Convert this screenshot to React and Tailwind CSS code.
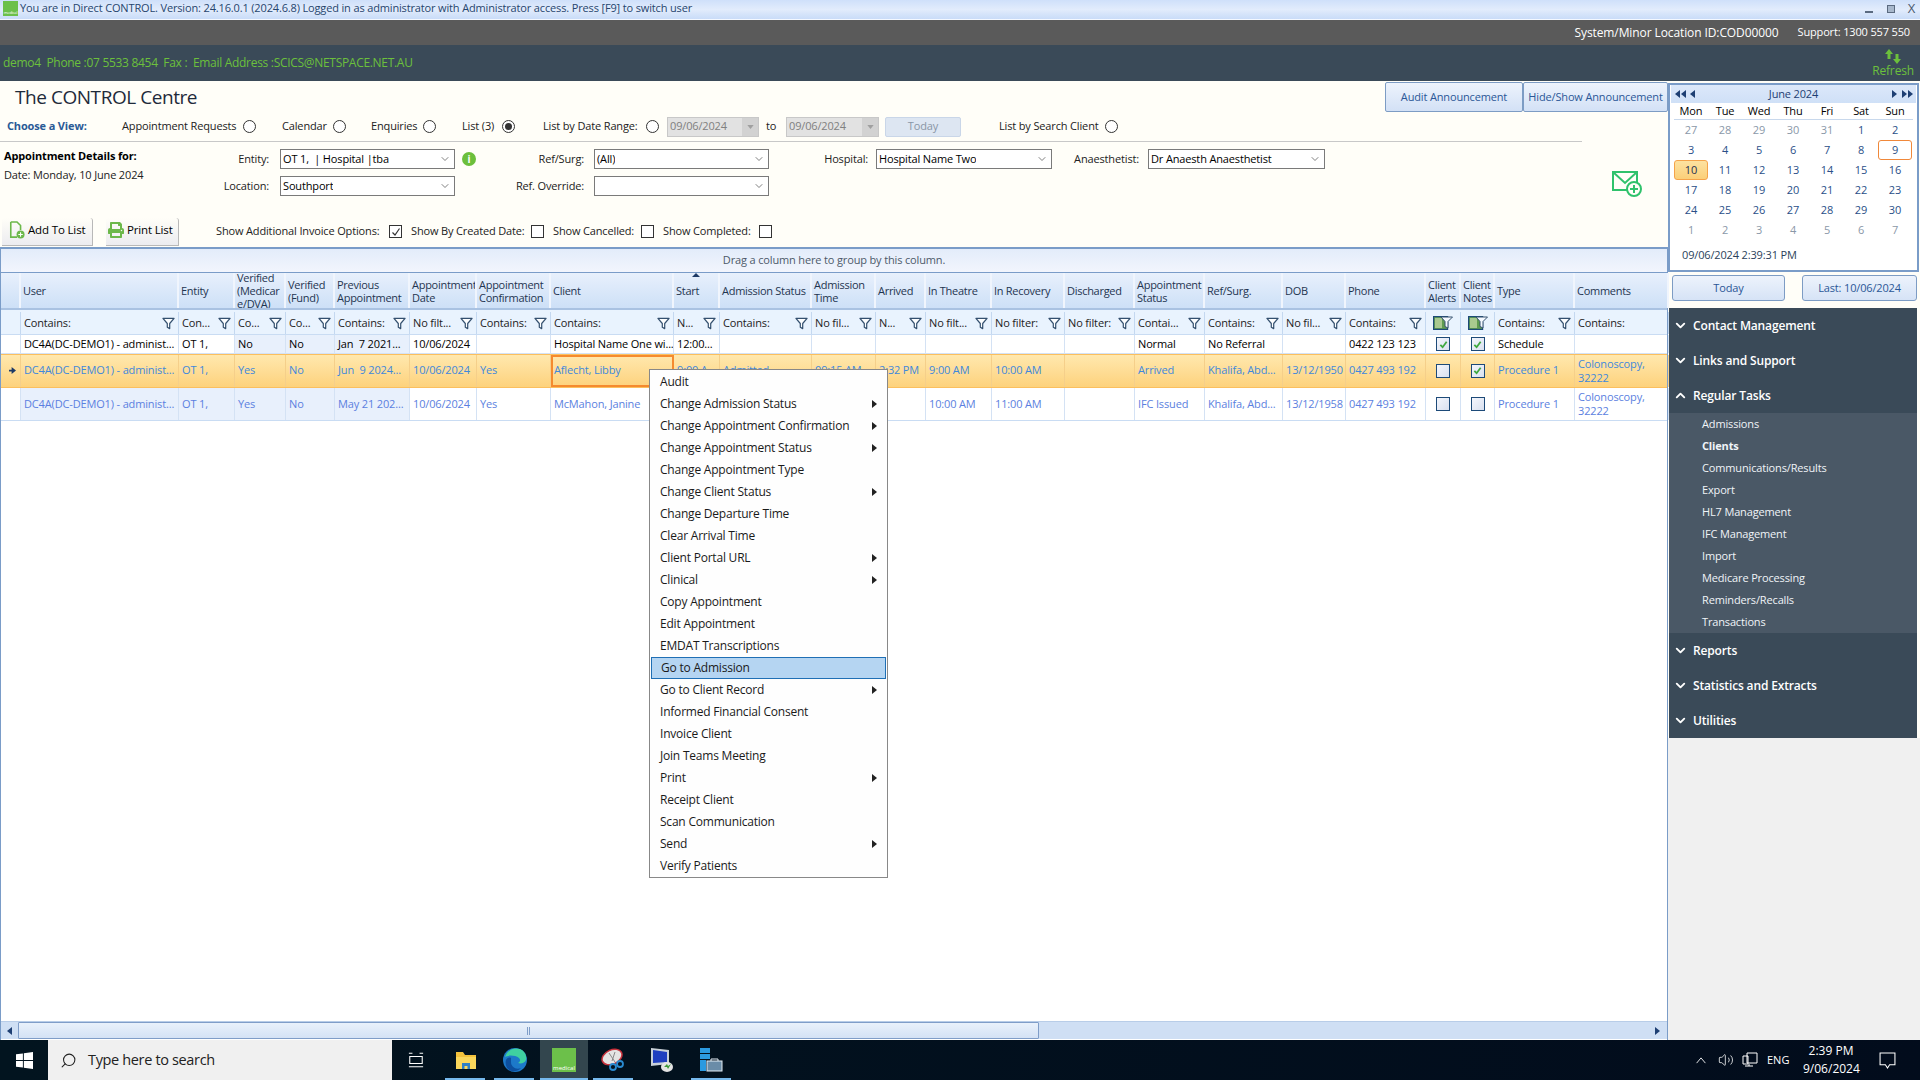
import React from "react";
import { ChevronDown, ChevronUp, Volume2, Search } from "lucide-react";
import { FaPrint } from "react-icons/fa";

const COLS = "grid grid-cols-[20px_158px_56px_51px_49px_75px_67px_74px_123px_46px_92px_64px_50px_66px_73px_70px_70px_78px_63px_80px_35px_34px_80px_94px]";

const Radio = ({ on, className = "" }) => (
  <span className={`w-[13px] h-[13px] shrink-0 rounded-full border border-[#333] bg-white flex items-center justify-center ${className}`}>
    {on && <span className="w-[7px] h-[7px] rounded-full bg-[#333]" />}
  </span>
);

const Filter = ({ className = "" }) => (
  <svg viewBox="0 0 14 14" className={`w-[13px] h-[13px] shrink-0 ${className}`}>
    <path d="M1 1.5h12L8.3 7v5.5L5.7 11V7z" fill="#fdfeff" stroke="#34506f" strokeWidth="1.3" strokeLinejoin="round" />
  </svg>
);

const FilterBox = () => (
  <svg viewBox="0 0 20 14" className="w-[20px] h-[14px]">
    <rect x="0.6" y="0.6" width="14" height="12.8" fill="#5f9b50" stroke="#1d4a78" strokeWidth="1.2" />
    <rect x="2" y="2" width="7" height="10" fill="#a9c98f" />
    <path d="M8 1h11.5L15 5.5V12l-3-1.5v-5z" fill="#f5f9ff" stroke="#34506f" strokeWidth="1" strokeLinejoin="round" />
  </svg>
);

const Check = ({ on }) => (
  <span className="w-[14px] h-[14px] border border-[#1d4a78] bg-gradient-to-br from-[#f4f6fc] to-[#d9e0ef] flex items-center justify-center">
    {on && (
      <svg viewBox="0 0 10 10" className="w-[9px] h-[9px]">
        <path d="M1.5 5.5L4 8l4.5-6" fill="none" stroke="#3fa83f" strokeWidth="2" />
      </svg>
    )}
  </span>
);

const PlainBox = ({ on }) => (
  <span className="w-[13px] h-[13px] border border-[#333] bg-white flex items-center justify-center ml-[6px] shrink-0">
    {on && (
      <svg viewBox="0 0 10 10" className="w-[10px] h-[10px]">
        <path d="M1.5 5.5L4 8l4.5-6.5" fill="none" stroke="#333" strokeWidth="1.2" />
      </svg>
    )}
  </span>
);

const Select = ({ w, value }) => (
  <div className={`${w} h-[20px] shrink-0 border border-[#7a7a7a] bg-white flex items-center justify-between pl-[2px] pr-[3px] text-black`}>
    <span className="whitespace-pre overflow-hidden">{value}</span>
    <ChevronDown size={12} strokeWidth={1.5} color="#555" />
  </div>
);

const DateBox = ({ w }) => (
  <div className={`${w} h-[20px] shrink-0 border border-[#c8c8c8] bg-[#e2e2e2] flex items-center justify-between pl-[2px] text-[#808080]`}>
    <span>09/06/2024</span>
    <span className="w-[16px] h-full bg-[#d2d2d2] flex items-center justify-center">
      <svg viewBox="0 0 8 5" className="w-[7px] h-[4px]"><path d="M0 0h8L4 5z" fill="#a0a0a0" /></svg>
    </span>
  </div>
);

const headers = [
  "", "User", "Entity", "Verified (Medicar e/DVA)", "Verified (Fund)", "Previous Appointment", "Appointment Date",
  "Appointment Confirmation", "Client", "Start", "Admission Status", "Admission Time", "Arrived", "In Theatre", "In Recovery",
  "Discharged", "Appointment Status", "Ref/Surg.", "DOB", "Phone", "Client Alerts", "Client Notes", "Type", "Comments",
];
const filters = [
  "", "Contains:", "Con...", "Co...", "Co...", "Contains:", "No filt...", "Contains:", "Contains:", "N...", "Contains:", "No fil...", "N...",
  "No filt...", "No filter:", "No filter:", "Contai...", "Contains:", "No fil...", "Contains:", "#", "#", "Contains:", "Contains:",
];
const row1 = ["", "DC4A(DC-DEMO1) - administ...", "OT 1,", "No", "No", "Jan  7 2021...", "10/06/2024", "", "Hospital Name One wi...", "12:00...", "", "", "", "", "", "", "Normal", "No Referral", "", "0422 123 123", true, true, "Schedule", ""];
const row2 = ["*", "DC4A(DC-DEMO1) - administ...", "OT 1,", "Yes", "No", "Jun  9 2024...", "10/06/2024", "Yes", "Aflecht, Libby", "9:00 A", "Admitted", "09:15 AM", "2:32 PM", "9:00 AM", "10:00 AM", "", "Arrived", "Khalifa, Abd...", "13/12/1950", "0427 493 192", false, true, "Procedure 1", "Colonoscopy, 32222"];
const row3 = ["", "DC4A(DC-DEMO1) - administ...", "OT 1,", "Yes", "No", "May 21 202...", "10/06/2024", "Yes", "McMahon, Janine", "", "", "", "", "10:00 AM", "11:00 AM", "", "IFC Issued", "Khalifa, Abd...", "13/12/1958", "0427 493 192", false, false, "Procedure 1", "Colonoscopy, 32222"];

const menu = [
  ["Audit"], ["Change Admission Status", 1], ["Change Appointment Confirmation", 1], ["Change Appointment Status", 1], ["Change Appointment Type"],
  ["Change Client Status", 1], ["Change Departure Time"], ["Clear Arrival Time"], ["Client Portal URL", 1], ["Clinical", 1], ["Copy Appointment"],
  ["Edit Appointment"], ["EMDAT Transcriptions"], ["Go to Admission", 0, 1], ["Go to Client Record", 1], ["Informed Financial Consent"], ["Invoice Client"],
  ["Join Teams Meeting"], ["Print", 1], ["Receipt Client"], ["Scan Communication"], ["Send", 1], ["Verify Patients"],
];

const cal = [
  [27, 28, 29, 30, 31, 1, 2], [3, 4, 5, 6, 7, 8, 9], [10, 11, 12, 13, 14, 15, 16], [17, 18, 19, 20, 21, 22, 23], [24, 25, 26, 27, 28, 29, 30], [1, 2, 3, 4, 5, 6, 7],
];

const Tri = ({ dir, double }) => (
  <svg viewBox={double ? "0 0 11 8" : "0 0 5 8"} className={double ? "w-[11px] h-[8px]" : "w-[5px] h-[8px]"}>
    {dir === "l" ? (
      <>
        <path d="M5 0v8L0 4z" fill="#1e3f73" />
        {double && <path d="M11 0v8L6 4z" fill="#1e3f73" />}
      </>
    ) : (
      <>
        <path d="M0 0v8l5-4z" fill="#1e3f73" />
        {double && <path d="M6 0v8l5-4z" fill="#1e3f73" />}
      </>
    )}
  </svg>
);

const Section = ({ open, label }) => (
  <div className="h-[35px] flex items-center pl-[4px] text-white text-[12px] font-semibold">
    {open ? <ChevronUp size={15} strokeWidth={3} /> : <ChevronDown size={15} strokeWidth={3} />}
    <span className="ml-[5px]">{label}</span>
  </div>
);

const GridRow = ({ cells, kind }) => {
  const isSel = kind === "sel";
  const rowCls = isSel
    ? "h-[34px] bg-gradient-to-b from-[#ffe8ae] to-[#fdd27c] border-y border-[#fbbf5e] text-[#3f88dc]"
    : kind === "a"
    ? "h-[19px] text-black border-b border-[#d4e2f4]"
    : "h-[33px] text-[#5b7fe0] border-b border-[#c9dcf3]";
  return (
    <div className={`${COLS} ${rowCls} shrink-0`}>
      {cells.map((c, i) => {
        const tinted = !isSel && ((kind === "a" && i >= 3 && i <= 5) || (kind === "b" && i >= 1 && i <= 5));
        const client = isSel && i === 8;
        return (
          <div
            key={i}
            className={`flex items-center overflow-hidden ${isSel ? "pb-[1px]" : ""} ${client ? "border-2 border-[#f58a2e] pl-[1px]" : `border-r ${isSel ? "border-[#f5cf8a]" : "border-[#d4e2f4]"}`} ${tinted ? "bg-[#e8f0fc]" : ""} ${typeof c === "boolean" ? "justify-center" : client ? "" : "pl-[3px]"} ${i === 0 ? "justify-center pl-0" : ""}`}
          >
            {typeof c === "boolean" ? (
              <Check on={c} />
            ) : c === "*" ? (
              <svg viewBox="0 0 8 8" className="w-[7px] h-[7px]"><path d="M0 3h3V0l5 4-5 4V5H0z" fill="#1d3a66" /></svg>
            ) : (
              <span className={i === 23 ? "block w-[70px] leading-[14px] whitespace-normal" : "whitespace-pre"}>{c}</span>
            )}
          </div>
        );
      })}
    </div>
  );
};

export default function App() {
  return (
    <div className="relative w-[1920px] h-[1080px] flex flex-col overflow-hidden text-[11px] text-[#222] font-['Open_Sans','Noto_Sans',sans-serif] tracking-[-0.15px] bg-[#fffef8]">
      {/* Title bar */}
      <div className="h-[20px] shrink-0 flex items-center justify-between pb-[2px] bg-gradient-to-b from-[#cfe0fa] via-[#e2ecfc] to-[#c9dcf8] border-b border-[#f4f8ff]">
        <div className="flex items-center">
          <div className="ml-[3px] w-[15px] h-[15px] bg-[#6cc04a] flex items-end justify-center text-[4px] leading-[6px] text-white">medical</div>
          <span className="ml-[2px] text-[#26456e]">You are in Direct CONTROL. Version: 24.16.0.1 (2024.6.8) Logged in as administrator with Administrator access. Press [F9] to switch user</span>
        </div>
        <div className="flex items-center text-[#4a5a70] mr-[5px]">
          <span className="w-[8px] h-[2px] mt-[6px] bg-[#5a6a80]" />
          <span className="ml-[14px] w-[8px] h-[8px] border border-[#5a6a80] bg-[#a8b8cc]" />
          <span className="ml-[13px] text-[13px] leading-none">X</span>
        </div>
      </div>
      {/* Gray bar */}
      <div className="h-[25px] shrink-0 bg-[#5a5a5a] flex items-center justify-end pr-[10px] text-white">
        <span className="text-[12px] tracking-[-0.1px]">System/Minor Location ID:COD00000</span>
        <span className="ml-[19px]">Support: 1300 557 550</span>
      </div>
      {/* Dark bar */}
      <div className="h-[36px] shrink-0 bg-[#3a4a58] flex items-center justify-between text-[#6cc03c] pl-[3px] pr-[6px]">
        <span className="text-[12px] tracking-[-0.3px]">demo4&nbsp; Phone :07 5533 8454&nbsp; Fax :&nbsp; Email Address :SCICS@NETSPACE.NET.AU</span>
        <div className="flex flex-col items-center">
          <svg viewBox="0 0 18 15" className="w-[18px] h-[15px]">
            <path d="M5 0l4 5H6.5v5h-3V5H1z" fill="#6cc03c" />
            <path d="M13 15l-4-5h2.500V5h3v5H17z" fill="#6cc03c" />
          </svg>
          <span className="leading-[14px] text-[12px]">Refresh</span>
        </div>
      </div>

      <div className="flex flex-1 min-h-0">
        {/* Main */}
        <div className="w-[1668px] shrink-0 flex flex-col">
          {/* Title row */}
          <div className="h-[31px] shrink-0 flex items-center justify-between pt-[1px]">
            <span className="ml-[15px] text-[19px] text-[#1e2a3a] tracking-[-0.45px]">The CONTROL Centre</span>
            <div className="flex h-[30px]">
              <button className="w-[138px] border border-[#7d9cc4] rounded-[2px] bg-gradient-to-b from-[#edf3fc] to-[#d3e1f6] text-[#2b5797]">Audit Announcement</button>
              <button className="w-[145px] border border-[#7d9cc4] rounded-[2px] bg-gradient-to-b from-[#edf3fc] to-[#d3e1f6] text-[#2b5797] whitespace-nowrap">Hide/Show Announcement</button>
            </div>
          </div>
          {/* View row */}
          <div className="h-[30px] w-[1582px] shrink-0 flex items-center border-b border-[#c8c8c8] whitespace-nowrap">
            <span className="ml-[7px] w-[115px] font-bold text-[#2a5a96]">Choose a View:</span>
            <span className="w-[116px]">Appointment Requests</span>
            <Radio className="ml-[5px]" />
            <span className="ml-[26px] w-[45px]">Calendar</span>
            <Radio className="ml-[6px]" />
            <span className="ml-[25px] w-[46px]">Enquiries</span>
            <Radio className="ml-[6px]" />
            <span className="ml-[26px] w-[32px]">List (3)</span>
            <Radio on className="ml-[8px]" />
            <span className="ml-[28px] w-[97px]">List by Date Range:</span>
            <Radio className="ml-[6px]" />
            <div className="ml-[8px]"><DateBox w="w-[92px]" /></div>
            <span className="ml-[7px] w-[20px]">to</span>
            <DateBox w="w-[93px]" />
            <button className="ml-[6px] w-[76px] h-[20px] rounded-[2px] border border-[#c9d6e8] bg-[#dde6f2] text-[#8a96a6]">Today</button>
            <span className="ml-[38px] w-[100px]">List by Search Client</span>
            <Radio className="ml-[6px]" />
          </div>
          {/* Filter form */}
          <div className="h-[76px] shrink-0 flex whitespace-nowrap">
            <div className="w-[190px] shrink-0 pl-[4px] pt-[5px]">
              <div className="font-bold text-black leading-[18px]">Appointment Details for:</div>
              <div className="leading-[18px] mt-[1px]">Date: Monday, 10 June 2024</div>
            </div>
            <div className="w-[1135px] shrink-0 pt-[7px] flex flex-col gap-[7px]">
              <div className="flex items-center">
                <span className="w-[79px] text-right mr-[11px]">Entity:</span>
                <Select w="w-[175px]" value="OT 1,  | Hospital |tba" />
                <span className="ml-[7px] w-[14px] h-[14px] rounded-full bg-[#6cbf3c] text-white font-bold text-[10px] flex items-center justify-center">i</span>
                <span className="w-[108px] text-right mr-[10px]">Ref/Surg:</span>
                <Select w="w-[175px]" value="(All)" />
                <span className="w-[99px] text-right mr-[8px]">Hospital:</span>
                <Select w="w-[176px]" value="Hospital Name Two" />
                <span className="w-[87px] text-right mr-[9px]">Anaesthetist:</span>
                <Select w="w-[177px]" value="Dr Anaesth Anaesthetist" />
              </div>
              <div className="flex items-center">
                <span className="w-[79px] text-right mr-[11px]">Location:</span>
                <Select w="w-[175px]" value="Southport" />
                <span className="w-[129px] text-right mr-[10px]">Ref. Override:</span>
                <Select w="w-[175px]" value="" />
              </div>
            </div>
            <svg viewBox="0 0 30 26" className="w-[30px] h-[26px] ml-[287px] mt-[29px]">
              <path d="M1 1h24v18H1zM1 1l12 11L25 1" fill="none" stroke="#2fc26c" strokeWidth="2" />
              <circle cx="22" cy="18" r="7" fill="#fffef8" stroke="#2fc26c" strokeWidth="2" />
              <path d="M22 14v8M18 18h8" stroke="#2fc26c" strokeWidth="2" />
            </svg>
          </div>
          {/* Toolbar */}
          <div className="h-[29px] shrink-0 flex items-center pb-[2px] whitespace-nowrap">
            <button className="ml-[2px] self-start w-[91px] h-[28px] pb-[4px] pl-[7px] flex items-center justify-start gap-[3px] text-[11.5px] bg-gradient-to-b from-[#fffef8] to-[#ececf0] border-r border-b border-[#b8b8b8] rounded-t-[3px] text-black">
              <svg viewBox="0 0 18 20" className="w-[16px] h-[18px]">
                <path d="M2 1h7l4 4v5M9 18H2V1" fill="none" stroke="#6cb84a" strokeWidth="1.8" />
                <circle cx="13" cy="15" r="4.5" fill="#6cb84a" />
                <path d="M13 12.5v5M10.5 15h5" stroke="#fff" strokeWidth="1.2" />
              </svg>
              Add To List
            </button>
            <button className="ml-[13px] self-start w-[73px] h-[28px] pb-[4px] pl-[2px] flex items-center justify-start gap-[3px] text-[11.5px] bg-gradient-to-b from-[#fffef8] to-[#ececf0] border-r border-b border-[#b8b8b8] rounded-t-[3px] text-black">
              <FaPrint size={16} color="#6cb84a" />
              Print List
            </button>
            <span className="ml-[37px] w-[167px]">Show Additional Invoice Options:</span>
            <PlainBox on />
            <span className="ml-[9px] w-[114px]">Show By Created Date:</span>
            <PlainBox />
            <span className="ml-[9px] w-[82px]">Show Cancelled:</span>
            <PlainBox />
            <span className="ml-[9px] w-[90px]">Show Completed:</span>
            <PlainBox />
          </div>
          {/* Grid */}
          <div className="flex-1 min-h-0 flex flex-col border-x border-[#7a9cc8] bg-white whitespace-nowrap">
            <div className="h-[25px] shrink-0 border-t-2 border-[#7a9cc8] bg-gradient-to-b from-[#e3ecfa] to-[#f2f5fd] flex items-center justify-center text-[#4d5a6a]">
              Drag a column here to group by this column.
            </div>
            <div className={`${COLS} h-[38px] shrink-0 border-t border-[#7a9cc8] border-b-2 border-b-[#a9c2e2] bg-gradient-to-b from-[#e8f0fc] to-[#cde0f7] text-[#1f3550] leading-[13px] tracking-[-0.28px]`}>
              {headers.map((h, i) => (
                <div key={i} className="relative flex items-center pl-[2px] border-r-2 border-[#f0f5fd] whitespace-normal overflow-hidden">
                  {h}
                  {h === "Start" && <span className="absolute top-0 left-[18px] w-0 h-0 border-x-[4px] border-x-transparent border-b-[4px] border-b-[#1d3a66]" />}
                </div>
              ))}
            </div>
            <div className={`${COLS} h-[25px] shrink-0 pt-[2px] bg-[#e9f3fe] border-b border-[#c9dcf3]`}>
              {filters.map((f, i) => (
                <div key={i} className={`flex items-center border-r border-[#c4d8f0] ${f === "#" ? "justify-center" : "justify-between pl-[3px] pr-[3px]"} overflow-hidden`}>
                  {f === "#" ? <FilterBox /> : <span>{f}</span>}
                  {f && f !== "#" && i !== 23 && <Filter />}
                </div>
              ))}
            </div>
            <GridRow cells={row1} kind="a" />
            <GridRow cells={row2} kind="sel" />
            <GridRow cells={row3} kind="b" />
            <div className="flex-1" />
            <div className="h-[18px] shrink-0 mb-[1px] flex items-center bg-[#cfdff4] border-t border-[#b8cde8]">
              <span className="w-[17px] flex justify-center"><Tri dir="l" /></span>
              <div className="relative w-[1021px] h-full border border-[#7f9dc8] rounded-[1px] bg-gradient-to-b from-[#e9f1fb] to-[#d4e2f5] flex items-center justify-center">
                <span className="w-[3px] h-[8px] border-x border-[#7f9dc8]" />
              </div>
              <div className="flex-1" />
              <span className="w-[20px] flex justify-center"><Tri dir="r" /></span>
            </div>
          </div>
        </div>

        {/* Right column */}
        <div className="w-[252px] shrink-0 flex flex-col">
          <div className="h-[191px] shrink-0 pt-[2px]">
            <div className="h-full border-2 border-[#7a9cc8] bg-white mr-[1px] flex flex-col pl-[3px] pr-[3px]">
              <div className="h-[18px] shrink-0 -mx-[2px] bg-gradient-to-b from-[#dce8fa] to-[#cfe0f7] flex items-center text-[#1e3f73] pl-[4px] pr-[3px] justify-between">
                <span className="flex items-center gap-[4px]"><Tri dir="l" double /><Tri dir="l" /></span>
                <span>June 2024</span>
                <span className="flex items-center gap-[5px]"><Tri dir="r" /><Tri dir="r" double /></span>
              </div>
              <div className="grid grid-cols-[repeat(7,34px)] h-[17px] shrink-0 border-b border-[#c8d8ec] mx-[1px] text-black text-center items-center">
                {["Mon", "Tue", "Wed", "Thu", "Fri", "Sat", "Sun"].map((d) => <span key={d}>{d}</span>)}
              </div>
              <div className="grid grid-cols-[repeat(7,34px)] mx-[1px] text-center text-[#2a4f88]">
                {cal.flatMap((w, r) =>
                  w.map((d, c) => {
                    const muted = (r === 0 && c < 5) || r === 5;
                    const today = r === 2 && c === 0;
                    const sel = r === 1 && c === 6;
                    return (
                      <span key={`${r}-${c}`} className={`h-[20px] flex items-center justify-center rounded-[3px] ${muted ? "text-[#8a98a8]" : ""} ${today ? "border border-[#f5a34a] bg-gradient-to-b from-[#fde2a0] to-[#fbcf78] text-[#1e3050]" : ""} ${sel ? "border border-[#f0883a]" : ""}`}>
                        {d}
                      </span>
                    );
                  })
                )}
              </div>
              <div className="mt-[7px] pl-[9px] text-[#2a3f5a]">09/06/2024 2:39:31 PM</div>
            </div>
          </div>
          <div className="h-[29px] shrink-0 pt-[3px] pl-[4px] flex">
            <button className="w-[113px] h-[26px] border border-[#7d9cc4] rounded-[3px] bg-gradient-to-b from-[#edf3fc] to-[#d6e3f6] text-[#2b5797]">Today</button>
            <button className="ml-[17px] w-[115px] h-[26px] border border-[#7d9cc4] rounded-[3px] bg-gradient-to-b from-[#edf3fc] to-[#d6e3f6] text-[#2b5797]">Last: 10/06/2024</button>
          </div>
          <div className="h-[7px] shrink-0" />
          <div className="ml-[1px] mr-[3px] h-[430px] shrink-0 bg-[#3a4a58] flex flex-col">
            <Section label="Contact Management" />
            <Section label="Links and Support" />
            <Section open label="Regular Tasks" />
            <div className="h-[220px] bg-[#4a5866] text-[#f0f4f8] pl-[33px]">
              {["Admissions", "Clients", "Communications/Results", "Export", "HL7 Management", "IFC Management", "Import", "Medicare Processing", "Reminders/Recalls", "Transactions"].map((s) => (
                <div key={s} className={`h-[22px] flex items-center ${s === "Clients" ? "font-bold" : ""}`}>{s}</div>
              ))}
            </div>
            <Section label="Reports" />
            <Section label="Statistics and Extracts" />
            <Section label="Utilities" />
          </div>
          <div className="flex-1 bg-[#f0f0f0]" />
        </div>
      </div>

      {/* Taskbar */}
      <div className="h-[40px] shrink-0 flex items-center bg-gradient-to-r from-[#02141f] to-[#020c1c] text-white tracking-normal">
        <div className="w-[48px] flex justify-center">
          <svg viewBox="0 0 18 18" className="w-[17px] h-[17px]">
            <path d="M0 2.5l7.3-1v7H0zM8.3 1.3L18 0v8.5H8.3zM0 9.5h7.3v7L0 15.5zM8.3 9.5H18V18l-9.7-1.3z" fill="#fff" />
          </svg>
        </div>
        <div className="w-[344px] h-full bg-[#f0f0f0] flex items-center pl-[12px] text-[#222] text-[14.5px] tracking-[-0.35px]">
          <Search size={17} strokeWidth={1.5} className="-scale-x-100" />
          <span className="ml-[11px]">Type here to search</span>
        </div>
        <div className="w-[48px] flex justify-center">
          <svg viewBox="0 0 18 18" className="w-[16px] h-[16px]" fill="none" stroke="#fff" strokeWidth="1.2">
            <path d="M1 1.5h4M1 16.5h16M13 1.5h4M2 5h14v8H2z" />
          </svg>
        </div>
        <div className="w-[48px] h-full relative flex justify-center items-center ml-[2px]">
          <svg viewBox="0 0 22 22" className="w-[22px] h-[22px]">
            <path d="M1 3h7l2 3h11v14H1z" fill="#f4c23c" />
            <path d="M1 8h20v12H1z" fill="#fbd75b" />
            <path d="M7 14h8v6h-2.500v-3h-3v3H7z" fill="#2f7fc4" />
          </svg>
          <span className="absolute bottom-0 left-[3px] w-[40px] h-[2px] bg-[#76b9ed]" />
        </div>
        <div className="w-[50px] h-full relative flex justify-center items-center">
          <svg viewBox="0 0 24 24" className="w-[24px] h-[24px]">
            <circle cx="12" cy="12" r="12" fill="#1d79c9" />
            <path d="M2 9C4 2 11-1 17 1c5 2 7 7 6 11-1 3-5 4-8 3 2-1 3-3 1-5-4-3-11-3-14-1z" fill="#3fd0a0" />
            <path d="M8 14c0 5 5 8 10 6-2 3-9 5-13 1-2-2-3-6-2-9 1-2 3-3 5-2z" fill="#0d4f9e" />
          </svg>
          <span className="absolute bottom-0 left-[4px] w-[40px] h-[2px] bg-[#76b9ed]" />
        </div>
        <div className="w-[48px] h-full relative flex justify-center items-center bg-[#33464e]">
          <div className="w-[24px] h-[24px] bg-[#6cc04a] flex items-end justify-center text-[6px] leading-[8px] text-white">medical</div>
          <span className="absolute bottom-0 left-0 w-full h-[2px] bg-[#76b9ed]" />
        </div>
        <div className="w-[50px] h-full relative flex justify-center items-center">
          <svg viewBox="0 0 24 24" className="w-[24px] h-[24px]">
            <ellipse cx="11" cy="9" rx="10.5" ry="7" fill="#e4e4e4" stroke="#c8323c" strokeWidth="1.500" transform="rotate(-25 11 9)" />
            <path d="M8 5l6 9M14 4l-3 9" stroke="#888" strokeWidth="1" />
            <circle cx="12" cy="19" r="3" fill="none" stroke="#2a8ad0" strokeWidth="1.800" />
            <circle cx="19" cy="16" r="3" fill="none" stroke="#2a8ad0" strokeWidth="1.800" />
          </svg>
          <span className="absolute bottom-0 left-[5px] w-[40px] h-[2px] bg-[#76b9ed]" />
        </div>
        <div className="w-[48px] h-full flex justify-center items-center">
          <svg viewBox="0 0 24 24" className="w-[24px] h-[24px]">
            <path d="M1 0l18 2v14L1 18z" fill="#c8d0d8" />
            <path d="M3 2l14 2v10L3 15z" fill="#1f3fc0" />
            <ellipse cx="17" cy="19" rx="6" ry="5" fill="#e4e4e4" />
            <path d="M14 19l3-3 1 2 3-2-3 5-1-2z" fill="#3a9a3a" />
          </svg>
        </div>
        <div className="w-[50px] h-full relative flex justify-center items-center">
          <svg viewBox="0 0 24 24" className="w-[24px] h-[24px]">
            <path d="M1 0h10v5H1zM1 6h10v5H1zM1 12h6v11H1z" fill="#2b9ae0" />
            <rect x="8" y="13" width="15" height="10" fill="#6a8ca8" stroke="#e4eef5" strokeWidth="1" />
            <path d="M12 13v-2h7v2" fill="none" stroke="#e4eef5" strokeWidth="1" />
          </svg>
          <span className="absolute bottom-0 left-[5px] w-[40px] h-[2px] bg-[#76b9ed]" />
        </div>
        <div className="flex-1" />
        <svg viewBox="0 0 12 8" className="w-[12px] h-[7px]"><path d="M1 7l5-6 5 6" fill="none" stroke="#fff" strokeWidth="1" /></svg>
        <Volume2 size={16} strokeWidth={1.2} className="ml-[11px]" />
        <svg viewBox="0 0 16 16" className="w-[16px] h-[16px] ml-[8px]" fill="none" stroke="#fff" strokeWidth="1">
          <path d="M5 1h10v10H5zM1 4h5v8H1zM3 14h8M7 12v2" />
        </svg>
        <span className="ml-[9px] w-[24px] text-[11px]">ENG</span>
        <div className="ml-[12px] w-[56px] text-center text-[12px] leading-[18px] text-white">
          <div>2:39 PM</div>
          <div>9/06/2024</div>
        </div>
        <svg viewBox="0 0 16 16" className="w-[17px] h-[17px] ml-[20px] mr-[24px]" fill="none" stroke="#fff" strokeWidth="1">
          <path d="M1 1h14v11h-5l-2 3-2-3H1z" />
        </svg>
      </div>

      {/* Context menu */}
      <div className="absolute left-[649px] top-[369px] w-[239px] h-[509px] border border-[#888] bg-[#fefefe] p-px text-[#1a1a1a] text-[12px] tracking-[-0.21px] whitespace-nowrap">
        {menu.map(([label, sub, active]) => (
          <div
            key={label}
            className={`relative h-[22px] flex items-center pl-[9px] ${active ? "bg-[#b5d5f2] border border-[#1f6fb5] pl-[8px]" : ""}`}
          >
            {label}
            {sub ? (
              <svg viewBox="0 0 5 8" className="absolute left-[221px] w-[5px] h-[8px]">
                <path d="M0 0v8l5-4z" fill="#222" />
              </svg>
            ) : null}
          </div>
        ))}
      </div>
    </div>
  );
}
